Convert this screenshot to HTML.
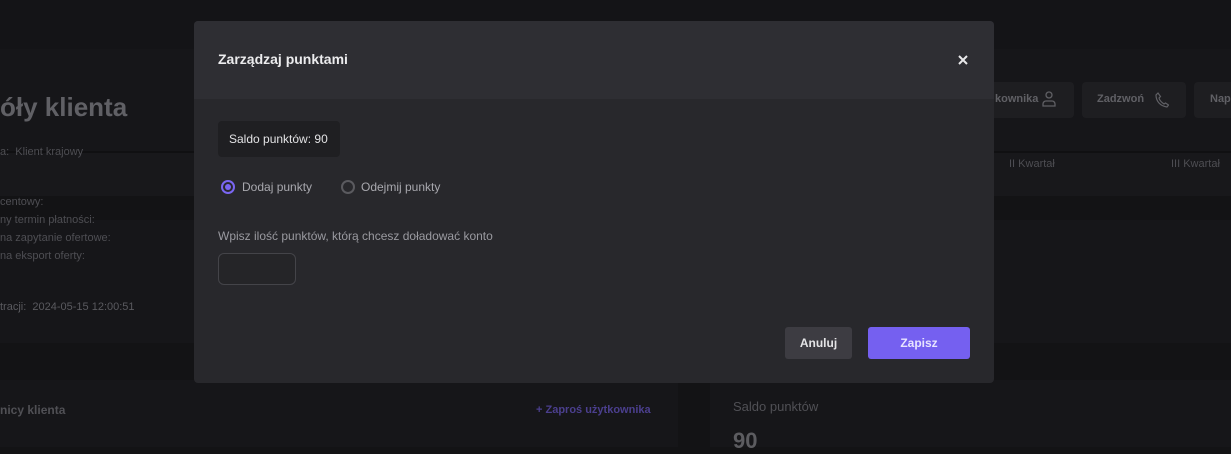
<!DOCTYPE html>
<html><head><meta charset="utf-8"><style>
*{margin:0;padding:0;box-sizing:border-box}
body{width:1231px;height:447px;overflow:hidden;background:#131315;font-family:"Liberation Sans",sans-serif;position:relative}
.a{position:absolute;white-space:nowrap}
.g{color:#4e4e53;font-size:11px}
</style></head><body>
<div class="a" style="left:0;top:0;width:1231px;height:49px;background:#141417"></div>
<div class="a" style="left:0;top:49px;width:1231px;height:102px;background:#161619"></div>
<div class="a" style="left:0;top:151px;width:1231px;height:2px;background:#101012"></div>
<div class="a" style="left:0;top:153px;width:1231px;height:43px;background:#18181b"></div>
<div class="a" style="left:0;top:196px;width:1231px;height:24px;background:#131315"></div>
<div class="a" style="left:0;top:220px;width:1231px;height:123px;background:#161619"></div>
<div class="a" style="left:0;top:380px;width:678px;height:67px;background:#161619"></div>
<div class="a" style="left:710px;top:380px;width:521px;height:67px;background:#161619"></div>
<div class="a" style="left:0;top:92px;font-size:26px;font-weight:bold;color:#606065">óły klienta</div>
<div class="a g" style="left:0;top:146px">a:&nbsp; Klient krajowy</div>
<div class="a g" style="left:0;top:196px">centowy:</div>
<div class="a g" style="left:0;top:214px">ny termin płatności:</div>
<div class="a g" style="left:0;top:232px">na zapytanie ofertowe:</div>
<div class="a g" style="left:0;top:250px">na eksport oferty:</div>
<div class="a g" style="left:0;top:301px;color:#5a5a5f">tracji:&nbsp; 2024-05-15 12:00:51</div>
<div class="a" style="left:0;top:403px;font-size:12px;font-weight:bold;color:#505055">nicy klienta</div>
<div class="a" style="left:536px;top:404px;font-size:11px;font-weight:bold;color:#4b3f8e">+ Zaproś użytkownika</div>
<div class="a" style="left:733px;top:399px;font-size:13px;color:#505055">Saldo punktów</div>
<div class="a" style="left:733px;top:428px;font-size:22px;font-weight:bold;color:#5c5c60">90</div>
<div class="a" style="left:960px;top:82px;width:114px;height:36px;background:#1e1e21;border-radius:4px"></div>
<div class="a" style="left:995px;top:93px;font-size:11px;font-weight:bold;color:#606065">kownika</div>
<svg class="a" style="left:1040px;top:90px" width="18" height="18" viewBox="0 0 18 18" fill="none" stroke="#606065" stroke-width="1.3"><circle cx="9" cy="5" r="3"/><path d="M3 16v-2a3 3 0 0 1 3-3h6a3 3 0 0 1 3 3v2z"/></svg>
<div class="a" style="left:1082px;top:82px;width:104px;height:36px;background:#1e1e21;border-radius:4px"></div>
<div class="a" style="left:1097px;top:93px;font-size:11px;font-weight:bold;color:#606065">Zadzwoń</div>
<svg class="a" style="left:1155px;top:92px" width="14" height="16" viewBox="0 0 14 16" fill="none" stroke="#606065" stroke-width="1.2"><path d="M3 1 1 3c0 6 4 11 11 12l1.5-2-3-2-1.5 1C6 10 4.5 8 4 6l1.5-1.5z"/></svg>
<div class="a" style="left:1194px;top:82px;width:50px;height:36px;background:#1e1e21;border-radius:4px"></div>
<div class="a" style="left:1210px;top:93px;font-size:11px;font-weight:bold;color:#606065">Nap</div>
<div class="a" style="left:1009px;top:158px;font-size:11px;color:#4e4e53">II Kwartał</div>
<div class="a" style="left:1171px;top:158px;font-size:11px;color:#4e4e53">III Kwartał</div>

<div class="a" style="left:194px;top:21px;width:800px;height:362px;background:#28282c;border-radius:4px;overflow:hidden">
<div class="a" style="left:0;top:0;width:800px;height:78px;background:#2e2e33"></div>
<div class="a" style="left:24px;top:30px;font-size:14px;font-weight:bold;color:#ececee">Zarządzaj punktami</div>
<svg class="a" style="left:764px;top:34px" width="10" height="10" viewBox="0 0 10 10" stroke="#e8e8ea" stroke-width="2"><path d="M1 1l8 8M9 1 1 9"/></svg>
<div class="a" style="left:24px;top:100px;width:122px;height:36px;background:#1f1f22;border-radius:4px;color:#e2e2e4;font-size:12px;line-height:36px;padding-left:11px">Saldo punktów: 90</div>
<div class="a" style="left:27px;top:159px;width:14px;height:14px;border:2px solid #7a66f2;border-radius:50%"><div style="margin:2px;width:6px;height:6px;background:#7a66f2;border-radius:50%"></div></div>
<div class="a" style="left:48px;top:159px;font-size:12px;color:#a8a8ae">Dodaj punkty</div>
<div class="a" style="left:147px;top:159px;width:14px;height:14px;border:2px solid #5a5a5f;border-radius:50%"></div>
<div class="a" style="left:167px;top:159px;font-size:12px;color:#a8a8ae">Odejmij punkty</div>
<div class="a" style="left:24px;top:208px;font-size:12px;color:#9a9aa0">Wpisz ilość punktów, którą chcesz doładować konto</div>
<div class="a" style="left:24px;top:232px;width:78px;height:32px;border:1px solid #444449;border-radius:6px;background:#252528"></div>
<div class="a" style="left:591px;top:306px;width:67px;height:32px;background:#3d3c42;border-radius:3px;color:#e4e4e6;font-size:12px;font-weight:bold;text-align:center;line-height:32px">Anuluj</div>
<div class="a" style="left:674px;top:306px;width:102px;height:32px;background:#7560f0;border-radius:3px;color:#e8e4ff;font-size:12px;font-weight:bold;text-align:center;line-height:32px">Zapisz</div>
</div>
</body></html>
